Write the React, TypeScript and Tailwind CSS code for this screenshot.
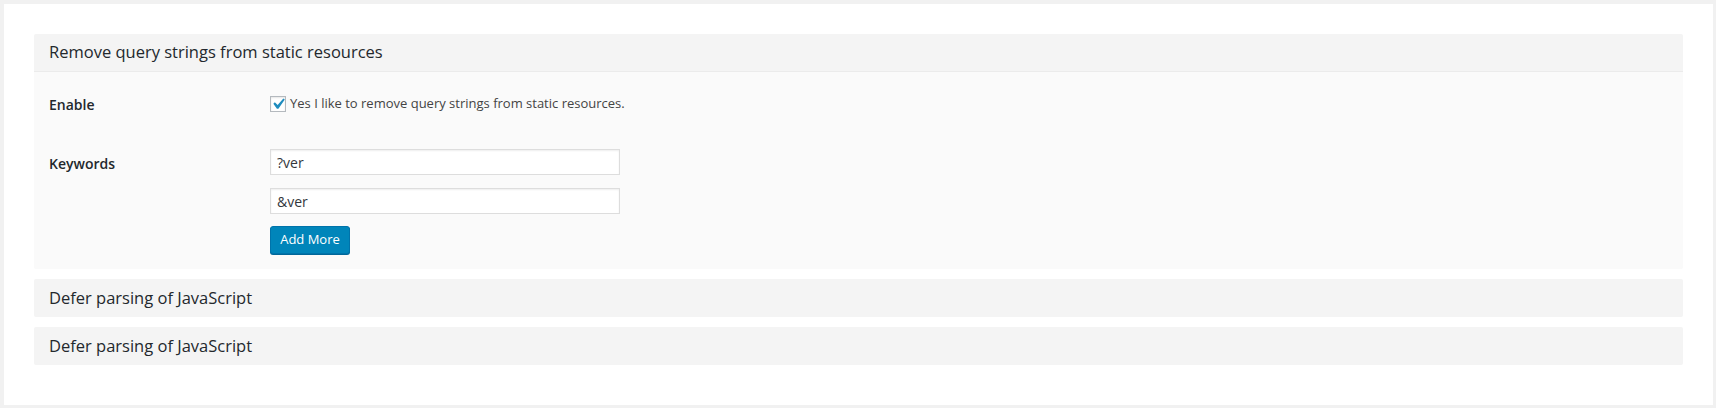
import React from 'react';

const font = { fontFamily: '"Open Sans", "Noto Sans", sans-serif' };

const SectionHeader = ({ title, bordered }: any) => (
  <div className={`h-[38px] bg-[#f4f4f4] px-[15px] flex items-center ${bordered ? 'border-b border-[#ebebeb]' : ''}`}>
    <h2 className="text-[16.5px] font-normal text-[#23282d] leading-none">{title}</h2>
  </div>
);

const Checkbox = () => (
  <span className="relative w-[16px] h-[16px] border border-[#b4b9be] bg-white shadow-[inset_0_1px_2px_rgba(0,0,0,0.1)] shrink-0">
    <svg viewBox="0 0 20 20" className="absolute -top-[4px] -left-[4px] w-[22px] h-[22px]" fill="#1e8cbe">
      <path d="M14.83 4.89l1.34.94-5.81 8.38H9.02L5.78 9.67l1.34-1.25 2.57 2.4z" />
    </svg>
  </span>
);

const TextInput = ({ value }: any) => (
  <input
    defaultValue={value}
    className="w-[350px] h-[26px] bg-white border border-[#dddddd] shadow-[inset_0_1px_2px_rgba(0,0,0,0.07)] px-[6px] text-[14px] text-[#32373c] outline-none"
  />
);

export default function App() {
  return (
    <div style={font} className="min-h-[408px] bg-[#f1f1f1] pt-[4px] pl-[4px] pr-[3px] pb-[3px]">
      <div className="bg-white px-[30px] pt-[30px] pb-[40px] flex flex-col gap-[10px]">
        <div className="rounded-[2px] overflow-hidden">
          <SectionHeader title="Remove query strings from static resources" bordered />
          <div className="bg-[#fafafa] px-[15px] pt-[22px] pb-[15px]">
            <div className="flex items-center h-[20px]">
              <div className="w-[221px] text-[14px] font-semibold text-[#23282d]">Enable</div>
              <label className="flex items-center gap-[4px] text-[13px] text-[#444]">
                <Checkbox />
                Yes I like to remove query strings from static resources.
              </label>
            </div>
            <div className="flex mt-[35px]">
              <div className="w-[221px] pt-[4px] text-[14px] font-semibold text-[#23282d]">Keywords</div>
              <div className="flex flex-col items-start gap-[13px]">
                <TextInput value="?ver" />
                <TextInput value="&ver" />
                <button className="-mt-px h-[28px] w-[80px] rounded-[3px] bg-[#0085ba] border border-[#0073aa] shadow-[0_1px_0_#006799] text-white text-[13px]">
                  Add More
                </button>
              </div>
            </div>
          </div>
        </div>
        <div className="rounded-[2px] overflow-hidden">
          <SectionHeader title="Defer parsing of JavaScript" />
        </div>
        <div className="rounded-[2px] overflow-hidden">
          <SectionHeader title="Defer parsing of JavaScript" />
        </div>
      </div>
    </div>
  );
}
